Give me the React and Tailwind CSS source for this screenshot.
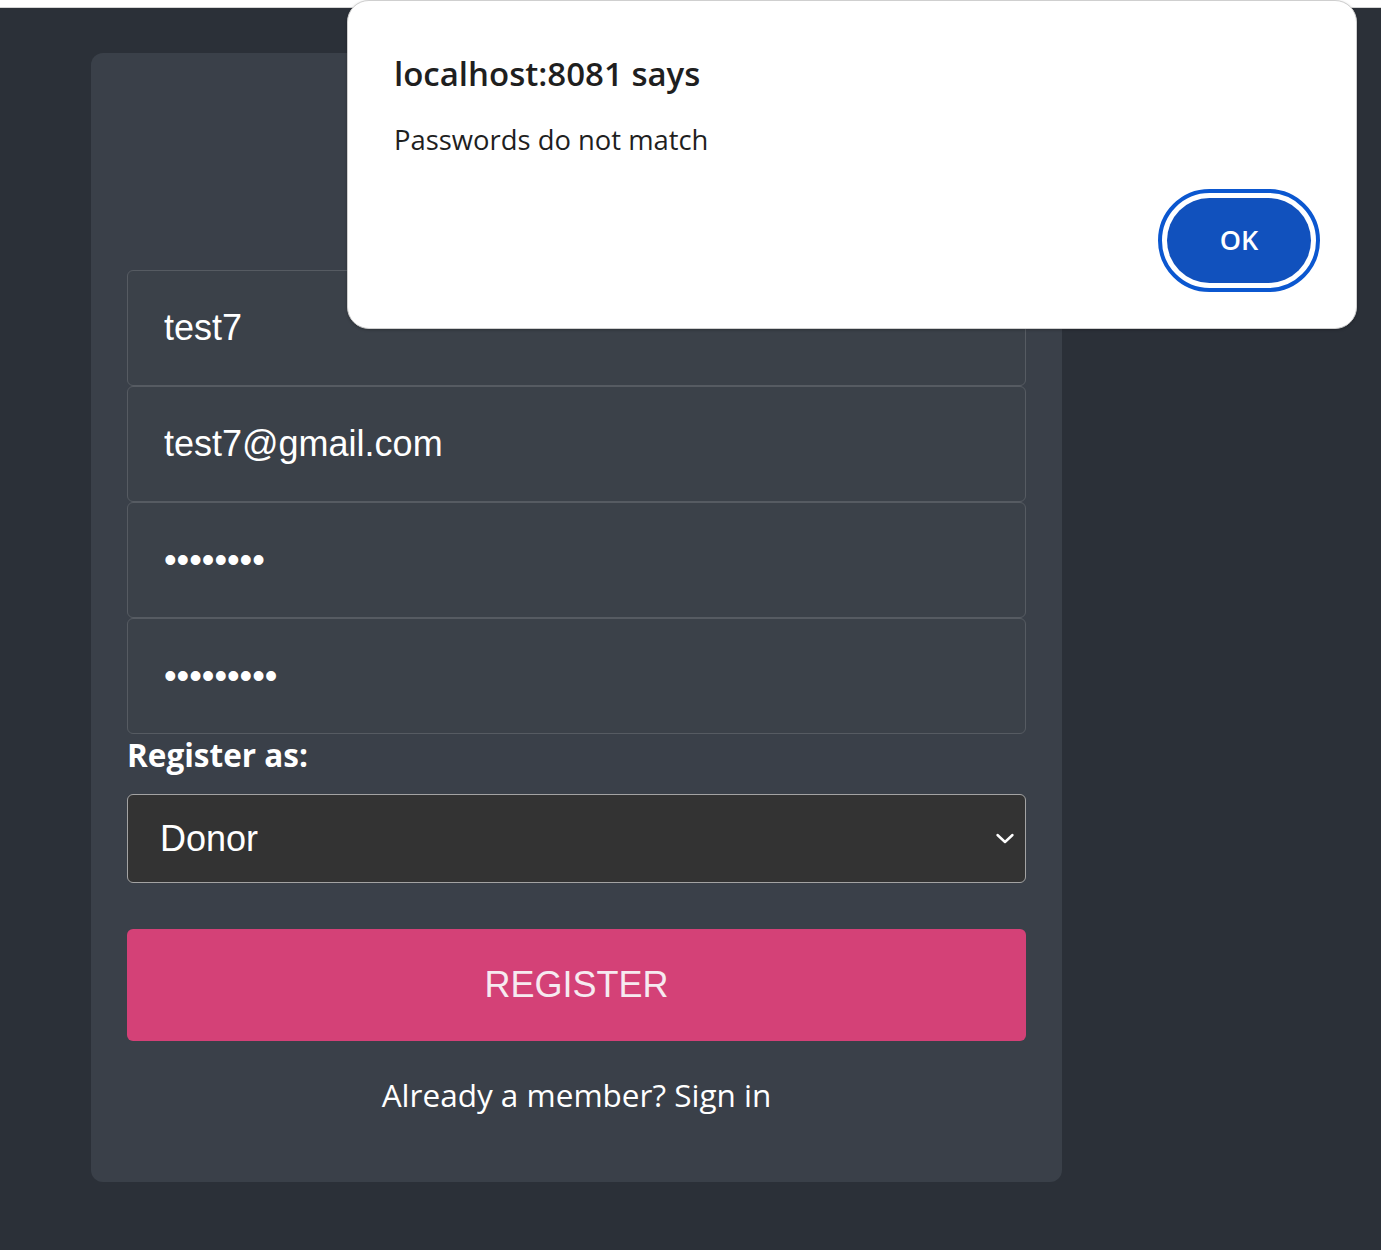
import React from "react";

function Field({ value, type = "text" }) {
  return (
    <input
      readOnly
      type={type}
      value={value}
      className="block h-[116px] w-full rounded-[6px] border border-[#565b62] bg-[#3b4149] pl-[36px] text-[36px] text-white outline-none"
      style={{ fontFamily: '"Liberation Sans", Arial, sans-serif' }}
    />
  );
}

export default function App() {
  return (
    <div className="relative min-h-[1250px] w-full bg-[#2b3038]">
      <div className="h-[8px] w-full border-b border-[#d4d4d4] bg-white" />
      <div className="ml-[91px] mt-[45px] w-[971px] rounded-[12px] bg-[#3a4049] px-[36px] pb-[65px] pt-[217px]">
        <Field value="test7" />
        <Field value="test7@gmail.com" />
        <Field value="12345678" type="password" />
        <Field value="123456789" type="password" />
        <div
          className="mb-[17px] h-[43px] text-[31.5px] font-bold leading-[41px] text-white"
          style={{ fontFamily: '"Open Sans", sans-serif' }}
        >
          Register as:
        </div>
        <div className="flex h-[89px] items-center justify-between rounded-[6px] border border-[#a3a3a3] bg-[#333333] pl-[32px] pr-[10px]">
          <span
            className="text-[36px] text-white"
            style={{ fontFamily: '"Liberation Sans", Arial, sans-serif' }}
          >
            Donor
          </span>
          <svg width="20" height="13" viewBox="0 0 20 13" fill="none">
            <path d="M2.5 3 L10 10 L17.5 3" stroke="white" strokeWidth="2.4" strokeLinecap="round" strokeLinejoin="round" />
          </svg>
        </div>
        <div className="mt-[46px] flex h-[112px] items-center justify-center rounded-[6px] bg-[#d44177]">
          <span
            className="text-[36px] text-[#f6eaf0]"
            style={{ fontFamily: '"Liberation Sans", Arial, sans-serif' }}
          >
            REGISTER
          </span>
        </div>
        <div
          className="mt-[32px] text-center text-[31.5px] leading-[44px] text-white"
          style={{ fontFamily: '"Open Sans", sans-serif' }}
        >
          Already a member? Sign in
        </div>
      </div>

      <div
        className="absolute left-[347px] top-0 h-[329px] w-[1010px] rounded-[22px] border border-[#cfcfcf] bg-white shadow-[0_1px_3px_rgba(0,0,0,0.25)]"
        style={{ fontFamily: '"Open Sans", sans-serif' }}
      >
        <div className="flex h-full flex-col pl-[46px] pr-[45px] pt-[51px]">
          <div className="text-[33px] font-semibold leading-[44px] text-[#1f1f1f]">
            localhost:8081 says
          </div>
          <div className="mt-[25px] text-[27.4px] leading-[37px] text-[#1f1f1f]">
            Passwords do not match
          </div>
          <div className="mt-[40px] flex justify-end">
            <div className="flex h-[85px] w-[144px] items-center justify-center rounded-full bg-[#1151bd] text-[27px] font-semibold text-white outline outline-[4px] outline-offset-[5px] outline-[#0b57d0]">
              OK
            </div>
          </div>
        </div>
      </div>
    </div>
  );
}
